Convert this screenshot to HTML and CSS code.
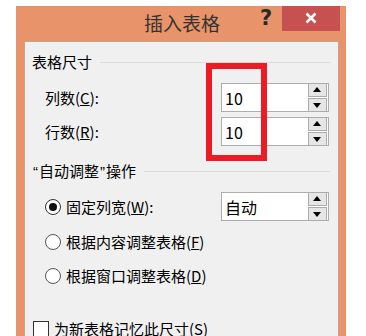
FILE: index.html
```html
<!DOCTYPE html>
<html lang="zh-CN">
<head>
    <meta charset="UTF-8">
    <title>插入表格</title>
    <link rel="stylesheet" href="styles.css">
</head>
<body>
    <div class="dialog">
        <div class="titlebar">
            <span class="title">插入表格</span>
            <span class="help">?</span>
            <span class="close">
                <svg width="12" height="12" viewBox="0 0 12 12">
                    <path d="M1.5 1.5 L10.5 10.5 M10.5 1.5 L1.5 10.5" stroke="#fff" stroke-width="2.6"/>
                </svg>
            </span>
        </div>

        <div class="panel">
            <div class="group-head"><span>表格尺寸</span></div>

            <div class="row first">
                <label class="label">列数(<u>C</u>):</label>
                <div class="spin">
                    <span class="value">10</span>
                    <div class="spin-btns">
                        <span class="btn up"></span>
                        <span class="btn down"></span>
                    </div>
                </div>
            </div>

            <div class="row second">
                <label class="label">行数(<u>R</u>):</label>
                <div class="spin">
                    <span class="value">10</span>
                    <div class="spin-btns">
                        <span class="btn up"></span>
                        <span class="btn down"></span>
                    </div>
                </div>
            </div>

            <div class="group-head auto"><span><span class="q">“</span>自动调整<span class="q">”</span>操作</span></div>

            <div class="row radio-row">
                <label class="label"><span class="radio checked"></span>固定列宽(<u>W</u>):</label>
                <div class="spin">
                    <span class="value">自动</span>
                    <div class="spin-btns">
                        <span class="btn up"></span>
                        <span class="btn down"></span>
                    </div>
                </div>
            </div>

            <div class="option opt-content">
                <span class="radio"></span>根据内容调整表格(<u>F</u>)
            </div>
            <div class="option opt-window">
                <span class="radio"></span>根据窗口调整表格(<u>D</u>)
            </div>

            <div class="remember">
                <span class="checkbox"></span>为新表格记忆此尺寸(<u>S</u>)
            </div>
        </div>

        <!-- red annotation box -->
        <div class="mark"></div>
    </div>
</body>
</html>
```

FILE: styles.css
```css
body {
    margin: 0;
    background: #fff;
    font-family: "Noto Sans CJK SC", "Microsoft YaHei", sans-serif;
    font-size: 15px;
    color: #000;
    overflow: hidden;
}

.dialog {
    position: relative;
    margin: 6px 0 0 16px;
    width: 330px;
    height: 340px;
    background: #e8936a;
}

.titlebar {
    display: flex;
    height: 35px;
}

.title {
    padding-left: 128px;
    flex: 1;
    font-size: 19px;
    line-height: 34px;
    color: #333;
}

.help {
    width: 13px;
    margin-right: 9px;
    font-family: "DejaVu Sans", sans-serif;
    font-weight: bold;
    font-size: 21px;
    line-height: 24px;
    color: #2a2a2a;
}

.close {
    display: flex;
    align-items: center;
    justify-content: center;
    width: 58px;
    height: 25px;
    margin-right: 6px;
    background: #c75050;
}

.close svg {
    margin-top: -2px;
}

.panel {
    margin: 0 7px 0 8px;
    height: 320px;
    background: #f0f0f0;
    border: 1px solid #c9a48c;
    border-bottom: none;
    padding: 10px 8px 0 7px;
    line-height: 20px;
}

.group-head {
    display: flex;
    align-items: center;
}

.group-head::after {
    content: "";
    flex: 1;
    height: 1px;
    background: #dcdcdc;
    margin-left: 8px;
}

.group-head.auto {
    margin-top: 15px;
}

.q {
    font-family: "Liberation Sans", sans-serif;
    padding: 0 1px;
}

.row {
    display: flex;
    align-items: center;
    justify-content: space-between;
    padding-left: 13px;
}

.row.first {
    margin-top: 11px;
}

.row.second {
    margin-top: 5px;
}

.row.radio-row {
    margin-top: 10px;
}

.label {
    display: flex;
    align-items: center;
}

.spin {
    display: flex;
    align-items: center;
    justify-content: space-between;
    width: 106px;
    height: 27px;
    background: #fff;
    border: 1px solid #adadad;
    margin-right: 1px;
}

.value {
    padding-left: 3px;
    font-size: 16px;
}

.spin-btns {
    display: flex;
    flex-direction: column;
    gap: 1px;
    margin-right: 1px;
}

.btn {
    position: relative;
    display: block;
    width: 17px;
    height: 12px;
    background: #e6e6e6;
    border: 1px solid #acacac;
}

.btn::after {
    content: "";
    position: absolute;
    left: 4px;
    width: 0;
    height: 0;
    border-left: 4.5px solid transparent;
    border-right: 4.5px solid transparent;
}

.btn.up::after {
    top: 3px;
    border-bottom: 5px solid #000;
}

.btn.down::after {
    top: 4px;
    border-top: 5px solid #000;
}

.radio {
    position: relative;
    display: inline-block;
    box-sizing: border-box;
    width: 16px;
    height: 16px;
    border: 1px solid #555;
    border-radius: 50%;
    background: #fff;
    margin-right: 5px;
}

.radio.checked {
    border-color: #333;
}

.radio.checked::after {
    content: "";
    position: absolute;
    left: 3px;
    top: 3px;
    width: 8px;
    height: 8px;
    border-radius: 50%;
    background: #111;
}

.option {
    display: flex;
    align-items: center;
    padding-left: 13px;
}

.opt-content {
    margin-top: 11px;
}

.opt-window {
    margin-top: 14px;
}

.remember {
    display: flex;
    align-items: center;
    margin-top: 33px;
    padding-left: 1px;
}

.checkbox {
    display: inline-block;
    box-sizing: border-box;
    width: 16px;
    height: 16px;
    border: 1px solid #333;
    background: #fff;
    margin-right: 5px;
}

.mark {
    position: absolute;
    left: 190px;
    top: 57px;
    width: 49px;
    height: 86px;
    border: 6px solid #ed1c24;
}
```
